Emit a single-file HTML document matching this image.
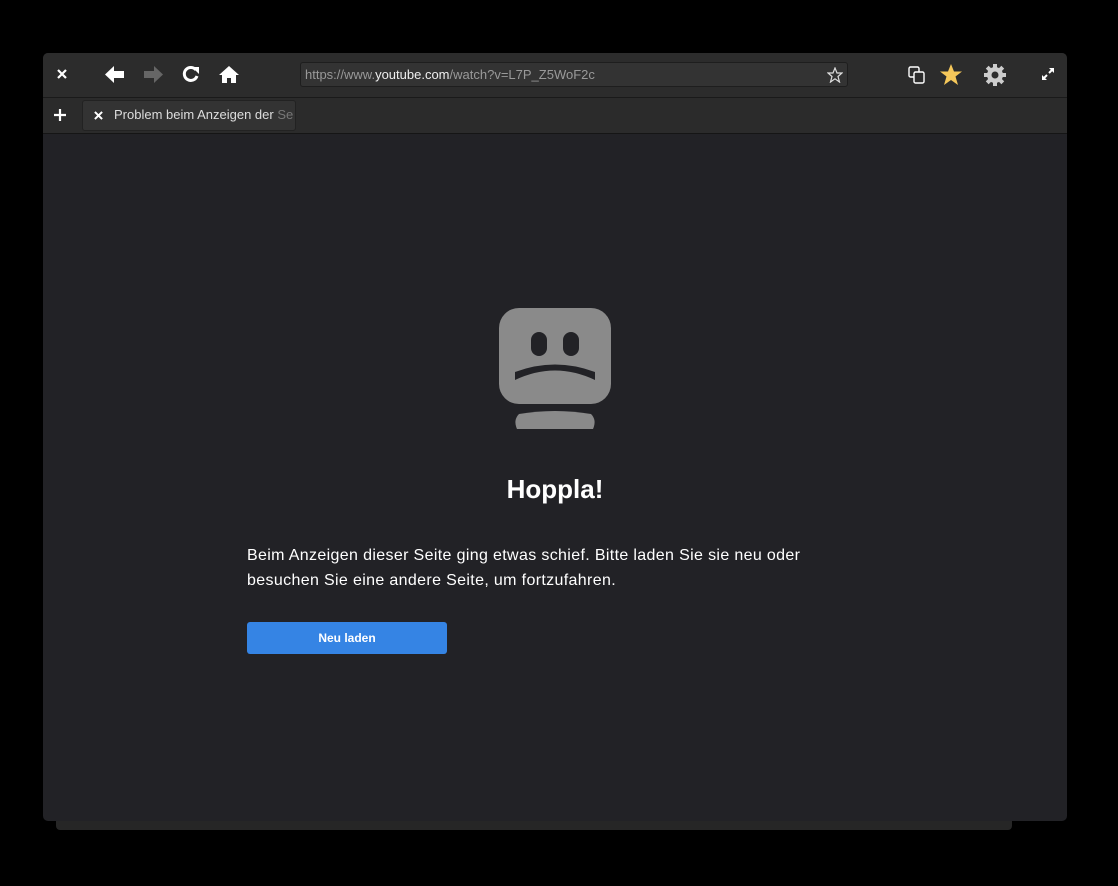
<!DOCTYPE html>
<html><head><style>
body{margin:0;width:1118px;height:886px;background:#000;font-family:"Liberation Sans",sans-serif;position:relative;overflow:hidden}
.win{position:absolute;left:43px;top:53px;width:1024px;height:768px;background:#222226;border-radius:5px;overflow:hidden}
.tb{position:absolute;left:0;top:0;width:1024px;height:44px;background:#2c2c2c;border-bottom:1px solid #1a1a1a}
.tabs{position:absolute;left:0;top:45px;width:1024px;height:35px;background:#2b2b2b;border-bottom:1px solid #151515}
.url{position:absolute;left:257px;top:9px;width:548px;height:25px;background:#333;border:1px solid #1e1e1e;border-radius:3px;font-size:13px;color:#999;line-height:24px;box-sizing:border-box;padding-left:4px}
.url b{color:#eee;font-weight:normal}
.tab{position:absolute;left:39px;top:2px;width:214px;height:31px;background:#333;border:1px solid #222;border-radius:3px;box-sizing:border-box;font-size:13px;color:#ddd;line-height:28px;padding-left:31px;white-space:nowrap;overflow:hidden}
.ic{position:absolute}
h1{position:absolute;left:0;width:1024px;top:421px;margin:0;text-align:center;color:#fff;font-size:26px;font-weight:bold}
p{position:absolute;left:204px;top:490px;margin:0;width:620px;color:#fff;font-size:16px;line-height:25px;letter-spacing:0.35px}
.btn{position:absolute;left:204px;top:569px;width:200px;height:32px;background:#3584e4;border-radius:3px;color:#fff;font-size:12px;font-weight:bold;text-align:center;line-height:32px}
</style></head><body>
<div style="position:absolute;left:56px;top:818px;width:956px;height:12px;background:#262626;border-radius:0 0 4px 4px"></div>
<div class="win">
<div class="tb">
<svg class="ic" style="left:14px;top:16px" width="10" height="10" viewBox="0 0 10 10"><path d="M1 1L9 9M9 1L1 9" stroke="#fff" stroke-width="2.2"/></svg>
<svg class="ic" style="left:62px;top:13px" width="20" height="17" viewBox="0 0 20 17"><path d="M0 8.5L9 0V5H19V12H9V17Z" fill="#fff"/></svg>
<svg class="ic" style="left:100px;top:13px" width="20" height="17" viewBox="0 0 20 17"><path d="M20 8.5L11 0V5H1V12H11V17Z" fill="#666"/></svg>
<svg class="ic" style="left:139px;top:12px" width="18" height="18" viewBox="0 0 18 18"><path d="M14 5A6.5 6.5 0 1 0 15 11" stroke="#fff" stroke-width="3" fill="none"/><path d="M10 2H17V9Z" fill="#fff"/></svg>
<svg class="ic" style="left:176px;top:12px" width="20" height="18" viewBox="0 0 20 18"><path d="M10 1L0 10H3V18H8V13H12V18H17V10H20Z" fill="#fff"/></svg>
<div class="url">https://www.<b>youtube.com</b>/watch?v=L7P_Z5WoF2c
<svg style="position:absolute;right:4px;top:4px" width="16" height="16" viewBox="0 0 16 16"><path d="M8 1L10 6H15L11 9.5L12.5 15L8 11.8L3.5 15L5 9.5L1 6H6Z" stroke="#ddd" stroke-width="1.2" fill="none"/></svg></div>
<svg class="ic" style="left:865px;top:13px" width="18" height="18" viewBox="0 0 18 18"><rect x="1" y="1" width="10" height="10" rx="1.5" stroke="#fff" stroke-width="1.4" fill="none"/><rect x="6" y="6" width="10" height="11" rx="1.5" stroke="#fff" stroke-width="1.4" fill="#2c2c2c"/></svg>
<svg class="ic" style="left:896px;top:10px" width="24" height="24" viewBox="0 0 24 24"><path d="M12 1L15 8.5H23L16.5 13.5L19 22L12 17L5 22L7.5 13.5L1 8.5H9Z" fill="#f6c85a"/></svg>
<svg class="ic" style="left:940px;top:10px" width="24" height="24" viewBox="0 0 24 24"><g fill="#ccc"><circle cx="12" cy="12" r="8"/><g stroke="#ccc" stroke-width="4"><path d="M12 1V23M1 12H23M4.2 4.2L19.8 19.8M19.8 4.2L4.2 19.8"/></g></g><circle cx="12" cy="12" r="3.5" fill="#2c2c2c"/></svg>
<svg class="ic" style="left:999px;top:15px" width="12" height="12" viewBox="0 0 12 12"><path d="M7 0H12V5ZM5 12H0V7Z" fill="#fff"/><path d="M10 2L7 5M2 10L5 7" stroke="#fff" stroke-width="2"/></svg>
</div>
<div class="tabs">
<svg class="ic" style="left:11px;top:11px" width="12" height="12" viewBox="0 0 12 12"><path d="M6 0V12M0 6H12" stroke="#fff" stroke-width="2.2"/></svg>
<div class="tab"><svg style="position:absolute;left:11px;top:10px" width="9" height="9" viewBox="0 0 10 10"><path d="M1 1L9 9M9 1L1 9" stroke="#fff" stroke-width="2.2"/></svg>Problem beim Anzeigen der <span style="color:#777">Se</span></div>
</div>
<svg class="ic" style="left:456px;top:255px" width="112" height="121" viewBox="0 0 112 121">
<rect x="0" y="0" width="112" height="96" rx="20" fill="#8a8a8a"/>
<rect x="32" y="24" width="16" height="24" rx="8" fill="#222226"/>
<rect x="64" y="24" width="16" height="24" rx="8" fill="#222226"/>
<path d="M16 72Q56 53 96 72L96 64Q56 49 16 64Z" fill="#222226"/>
<path d="M18 121Q14 112 20 106Q56 100 92 106Q98 112 94 121Z" fill="#8a8a8a"/>
</svg>
<h1>Hoppla!</h1>
<p>Beim Anzeigen dieser Seite ging etwas schief. Bitte laden Sie sie neu oder besuchen Sie eine andere Seite, um fortzufahren.</p>
<div class="btn">Neu laden</div>
</div>
</body></html>
